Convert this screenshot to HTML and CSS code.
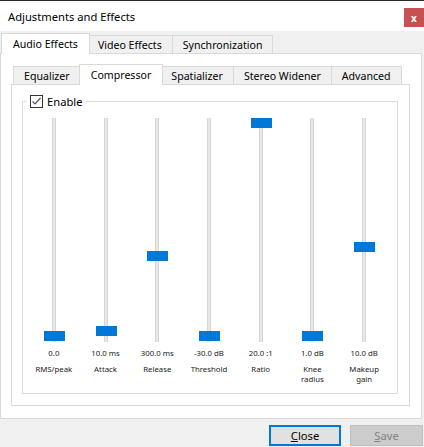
FILE: index.html
```html
<!DOCTYPE html>
<html lang="en">
<head>
  <meta charset="UTF-8" />
  <title>Adjustments and Effects</title>
  <link rel="stylesheet" href="styles.css">
</head>
<body>
  <div class="window">
    <div class="titlebar">
      <span>Adjustments and Effects</span>
      <span class="close">x</span>
    </div>

    <div class="tabs outer-tabs">
      <div class="tab active">Audio Effects</div>
      <div class="tab">Video Effects</div>
      <div class="tab">Synchronization</div>
    </div>

    <div class="pane outer-pane">
      <div class="tabs inner-tabs">
        <div class="tab">Equalizer</div>
        <div class="tab active">Compressor</div>
        <div class="tab">Spatializer</div>
        <div class="tab">Stereo Widener</div>
        <div class="tab">Advanced</div>
      </div>

      <div class="pane inner-pane">
        <fieldset class="group">
          <legend class="check">
            <span class="box">
              <svg width="11" height="11" viewBox="0 0 11 11"><polyline points="1.5,5.5 4,8 9.5,2" fill="none" stroke="#555" stroke-width="1.2"/></svg>
            </span>
            Enable
          </legend>

          <div class="sliders">
            <div class="slider">
              <div class="track"><div class="thumb" style="top: 213px"></div></div>
              <div class="value">0.0</div>
              <div class="name">RMS/peak</div>
            </div>
            <div class="slider">
              <div class="track"><div class="thumb" style="top: 208px"></div></div>
              <div class="value">10.0 ms</div>
              <div class="name">Attack</div>
            </div>
            <div class="slider">
              <div class="track"><div class="thumb" style="top: 133px"></div></div>
              <div class="value">300.0 ms</div>
              <div class="name">Release</div>
            </div>
            <div class="slider">
              <div class="track"><div class="thumb" style="top: 213px"></div></div>
              <div class="value">-30.0 dB</div>
              <div class="name">Threshold</div>
            </div>
            <div class="slider">
              <div class="track"><div class="thumb" style="top: 0px"></div></div>
              <div class="value">20.0 :1</div>
              <div class="name">Ratio</div>
            </div>
            <div class="slider">
              <div class="track"><div class="thumb" style="top: 213px"></div></div>
              <div class="value">1.0 dB</div>
              <div class="name">Knee<br>radius</div>
            </div>
            <div class="slider">
              <div class="track"><div class="thumb" style="top: 124px"></div></div>
              <div class="value">10.0 dB</div>
              <div class="name">Makeup<br>gain</div>
            </div>
          </div>
        </fieldset>
      </div>
    </div>

    <div class="buttons">
      <button class="btn default"><u>C</u>lose</button>
      <button class="btn disabled"><u>S</u>ave</button>
    </div>
  </div>
</body>
</html>
```

FILE: styles.css
```css
body {
  margin: 0;
  width: 424px;
  height: 447px;
  overflow: hidden;
  background: #f0f0f0;
  font-family: "Noto Sans", sans-serif;
  font-size: 11.2px;
  color: #000;
}
.window {
  border-top: 1px solid #2b2b2b;
}
.titlebar {
  height: 30px;
  background: #fff;
  display: flex;
  align-items: center;
  justify-content: space-between;
  padding-left: 8px;
}
.close {
  align-self: flex-start;
  margin-top: 7px;
  width: 20px;
  height: 19px;
  background: #c75050;
  color: #fff;
  font-weight: bold;
  font-size: 10px;
  display: flex;
  align-items: center;
  justify-content: center;
}

/* tabs */
.tabs {
  display: flex;
  align-items: flex-end;
  font-size: 10.6px;
  white-space: nowrap;
}
.outer-tabs {
  height: 22px;
  padding-left: 3px;
}
.inner-tabs {
  height: 30px;
  padding-left: 2px;
}
.tab {
  box-sizing: border-box;
  height: 18px;
  padding: 0 10px;
  border: 1px solid #d9d9d9;
  border-bottom: none;
  background: #f0f0f0;
  display: flex;
  align-items: center;
}
.tab + .tab {
  margin-left: -1px;
}
.tab.active {
  position: relative;
  z-index: 1;
  height: 21px;
  margin: 0 -2px -1px -2px;
  padding: 0 11px;
  background: #fff;
}

/* panes */
.pane {
  box-sizing: border-box;
  background: #fff;
  border: 1px solid #d9d9d9;
}
.outer-pane {
  width: 422px;
  height: 366px;
  padding: 0 11px 12px 10px;
  display: flex;
  flex-direction: column;
}
.inner-pane {
  flex: 1;
  padding: 10px 11px 11px 10px;
  display: flex;
}
.group {
  flex: 1;
  margin: 0;
  padding: 0;
  border: 1px solid #dcdcdc;
}
.check {
  margin-left: 3px;
  padding: 0 3px 0 4px;
  height: 13px;
  display: flex;
  align-items: center;
  gap: 4px;
}
.box {
  box-sizing: border-box;
  width: 13px;
  height: 13px;
  border: 1px solid #333;
  background: #fff;
  display: flex;
}

/* sliders */
.sliders {
  display: grid;
  grid-template-columns: repeat(7, 1fr);
  padding: 10px 7px 0 5px;
}
.slider {
  display: flex;
  flex-direction: column;
  align-items: center;
  font-size: 7.8px;
  line-height: 10px;
  color: #222;
  text-align: center;
}
.track {
  position: relative;
  box-sizing: border-box;
  width: 4px;
  height: 224px;
  background: #e7e7e7;
  border-left: 1px solid #d6d6d6;
  border-right: 1px solid #d6d6d6;
}
.thumb {
  position: absolute;
  left: -9px;
  width: 21px;
  height: 10px;
  background: #0078d7;
}
.value {
  margin-top: 6px;
}
.name {
  margin-top: 6px;
}

/* bottom buttons */
.buttons {
  display: flex;
  justify-content: flex-end;
  gap: 9px;
  padding: 6px 1px 0 0;
}
.btn {
  box-sizing: border-box;
  width: 73px;
  height: 21px;
  padding: 0;
  font-family: inherit;
  font-size: 11.2px;
  background: #e1e1e1;
  border: 1px solid #adadad;
  color: #000;
}
.btn.default {
  width: 72px;
  border: 2px solid #0078d7;
}
.btn.disabled {
  background: #cccccc;
  border-color: #bfbfbf;
  color: #838383;
}
```
